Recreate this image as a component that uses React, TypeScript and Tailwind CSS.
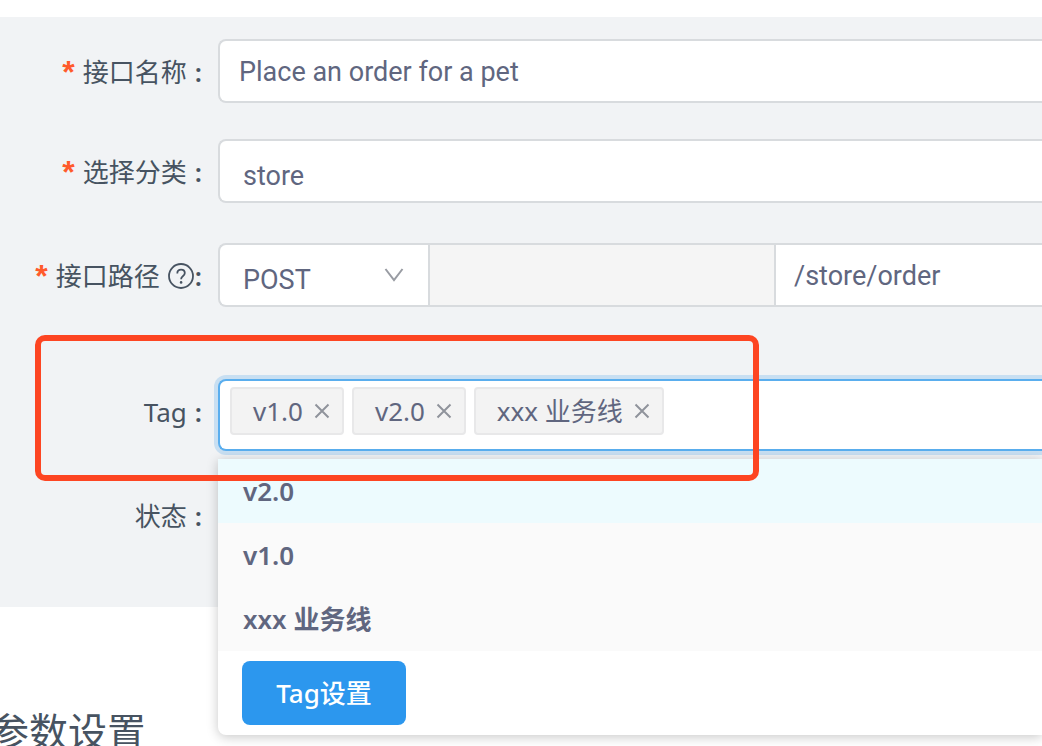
import type { ReactNode } from "react";

const tags = ["v1.0", "v2.0", "xxx 业务线"];
const options = ["v2.0", "v1.0", "xxx 业务线"];

function Label({
  htmlFor,
  required,
  help,
  children,
}: {
  htmlFor: string;
  required?: boolean;
  help?: boolean;
  children: ReactNode;
}) {
  return (
    <label
      htmlFor={htmlFor}
      className="w-[218px] h-16 shrink-0 pr-4 pt-0.5 flex items-center justify-end leading-8 text-[#475361]"
    >
      {required && (
        <span className="mr-2 font-['Liberation_Sans'] text-[32px] leading-8 font-bold text-[#ff5a2b] h-8" aria-hidden="true">
          *
        </span>
      )}
      <span>{children}</span>
      {help ? (
        <svg className="mx-2 mr-px w-[26px] h-[26px]" viewBox="0 0 26 26" fill="none" stroke="currentColor" strokeWidth="1.8" aria-hidden="true">
          <circle cx="13" cy="13" r="12" />
          <path d="M9.3 10.4c0-2.300 1.500-3.700 3.800-3.700s3.700 1.400 3.700 3.400c0 1.600-.9 2.400-2 3.200-1.200.9-1.700 1.500-1.700 2.900" />
          <circle cx="13.1" cy="19.4" r="1.3" fill="currentColor" stroke="none" />
        </svg>
      ) : (
        <span className="w-2" />
      )}
      <span className="font-semibold">:</span>
    </label>
  );
}

export default function App() {
  return (
    <main className="min-h-screen overflow-hidden bg-white pt-[17px] font-['Noto_Sans','Noto_Sans_CJK_SC',sans-serif] text-[26px] text-[#60667f]">
      <form className="h-[590px] bg-[#f1f3f5] pt-[22px]">
        {/* name */}
        <div className="flex items-start mb-9">
          <Label htmlFor="name" required>
            接口名称
          </Label>
          <input
            id="name"
            defaultValue="Place an order for a pet"
            className="flex-1 min-w-0 h-16 rounded-l-lg border-2 border-r-0 border-[#d8dbde] bg-white pl-[19px] pt-0.5 font-['Roboto'] text-[27px] outline-none"
          />
        </div>

        {/* category */}
        <div className="flex items-start mb-10">
          <Label htmlFor="category" required>
            选择分类
          </Label>
          <select
            id="category"
            className="appearance-none flex-1 min-w-0 h-16 rounded-l-lg border-2 border-r-0 border-[#d8dbde] bg-white pl-[23px] pt-2.5 font-['Roboto'] text-[27px] outline-none"
          >
            <option>store</option>
          </select>
        </div>

        {/* path */}
        <div className="flex items-start mb-[72px]">
          <Label htmlFor="path" required help>
            接口路径
          </Label>
          <div className="flex flex-1 min-w-0 h-16 rounded-l-lg border-2 border-r-0 border-[#d8dbde] bg-white font-['Roboto'] text-[27px]">
            <div className="relative w-[210px] shrink-0 border-r-2 border-[#d8dbde]">
              <select
                aria-label="Method"
                className="appearance-none w-full h-full pl-[23px] pt-2.5 outline-none"
              >
                <option>POST</option>
              </select>
              <svg className="absolute right-6 top-[22px] w-5 h-4 pointer-events-none" viewBox="0 0 20 16" fill="none" stroke="#999ca3" strokeWidth="2" aria-hidden="true">
                <path d="M1.500 2 10 13 18.500 2" />
              </svg>
            </div>
            <input
              disabled
              aria-label="Base path"
              className="w-[346px] shrink-0 bg-[#f5f5f5] border-r-2 border-[#d8dbde]"
            />
            <input
              id="path"
              defaultValue="/store/order"
              className="flex-1 min-w-0 pl-[18px] pt-0.5 outline-none"
            />
          </div>
        </div>

        {/* tag */}
        <div className="relative flex items-start mb-8">
          <Label htmlFor="tag">Tag</Label>
          <div className="relative flex-1 min-w-0">
            <div className="flex items-start gap-2 h-[72px] rounded-l-lg border-2 border-r-0 border-[#5aaeee] bg-white pt-[6px] pl-[10px] shadow-[0_0_0_4px_#c8dff2]">
              {tags.map((tag) => (
                <span
                  key={tag}
                  className="flex items-center shrink-0 h-12 rounded border-2 border-[#e8e8e9] bg-[#f3f3f3] pl-[21px] pr-3"
                >
                  {tag}
                  <button type="button" aria-label={`Remove ${tag}`} className="ml-[11px]">
                    <svg className="w-4 h-4" viewBox="0 0 16 16" fill="none" stroke="#8f939b" strokeWidth="2" aria-hidden="true">
                      <path d="M1.500 1.500l13 13M14.500 1.500l-13 13" />
                    </svg>
                  </button>
                </span>
              ))}
              <input id="tag" className="flex-1 min-w-0 h-12 outline-none" />
            </div>
            {/* dropdown */}
            <div className="absolute left-0 right-0 top-full mt-2 z-10 rounded-bl-lg bg-white pb-2.5 shadow-[0_2px_12px_rgba(0,0,0,0.22)]">
              <ul role="listbox" aria-label="Tag" className="font-semibold">
                {options.map((option, i) => (
                  <li
                    key={option}
                    role="option"
                    aria-selected={i === 0}
                    className="h-16 flex items-center pl-[25px] bg-[#fafafa] aria-selected:bg-[#edfbfe]"
                  >
                    {option}
                  </li>
                ))}
              </ul>
              <button
                type="button"
                className="ml-6 mt-2.5 w-[164px] h-16 rounded-lg bg-[#2c97ee] font-medium text-white"
              >
                Tag设置
              </button>
            </div>
          </div>
          {/* highlight frame */}
          <div className="absolute z-20 left-[35px] -top-11 w-[724px] h-[146px] rounded-[10px] border-6 border-[#fd4522] pointer-events-none" />
        </div>

        {/* status */}
        <div className="flex items-start">
          <Label htmlFor="status">状态</Label>
          <select id="status" className="appearance-none flex-1 h-16 outline-none" />
        </div>
      </form>

      <h2 className="-ml-2.5 mt-24 h-11 text-[39px] leading-[56px] text-[#475361]">参数设置</h2>
    </main>
  );
}
